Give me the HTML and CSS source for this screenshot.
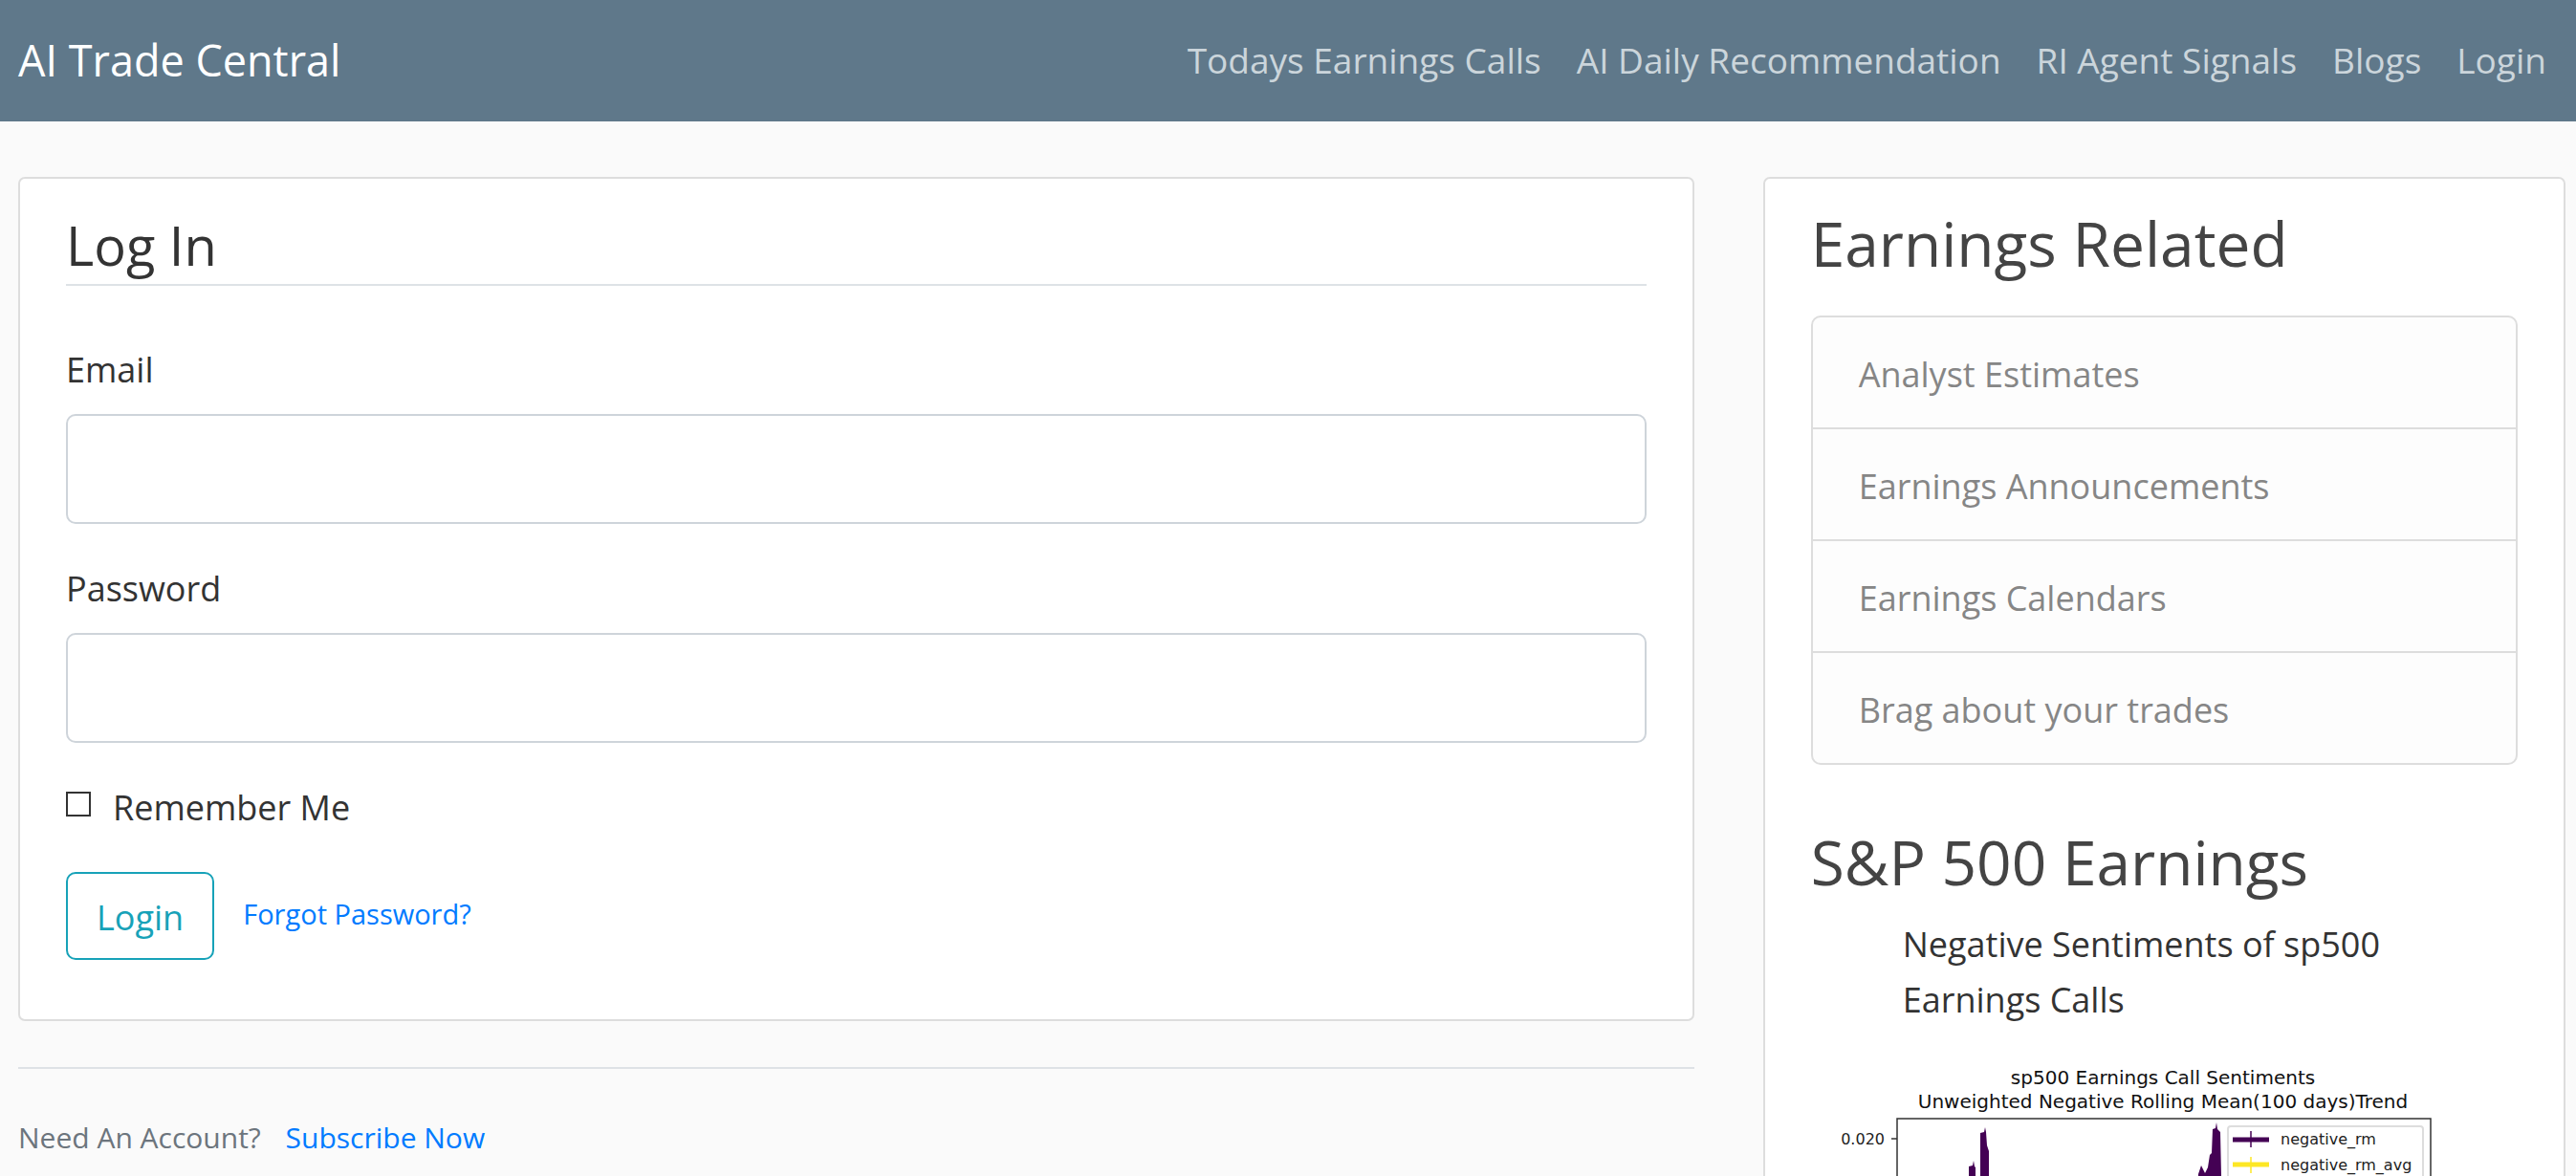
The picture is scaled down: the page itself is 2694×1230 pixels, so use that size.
FILE: index.html
```html
<!DOCTYPE html>
<html lang="en">
<head>
<meta charset="utf-8">
<meta name="viewport" content="width=device-width, initial-scale=1">
<title>AI Trade Central - Log In</title>
<link rel="stylesheet" href="styles.css">
</head>
<body>
<header class="navbar">
  <a class="brand" href="#">AI Trade Central</a>
  <nav class="nav">
    <a href="#">Todays Earnings Calls</a>
    <a href="#">AI Daily Recommendation</a>
    <a href="#">RI Agent Signals</a>
    <a href="#">Blogs</a>
    <a href="#">Login</a>
  </nav>
</header>
<main class="layout">
  <div class="primary">
    <section class="card login-card">
      <form>
        <h1 class="legend">Log In</h1>
        <div class="field">
          <label for="email">Email</label>
          <input class="control" id="email" type="email">
        </div>
        <div class="field">
          <label for="password">Password</label>
          <input class="control" id="password" type="password">
        </div>
        <div class="check">
          <input id="remember" type="checkbox">
          <label for="remember">Remember Me</label>
        </div>
        <div class="actions">
          <button class="button" type="submit">Login</button>
          <a class="small-link" href="#">Forgot Password?</a>
        </div>
      </form>
    </section>
    <p class="signup">Need An Account? <a href="#">Subscribe Now</a></p>
  </div>
  <aside class="card sidebar">
    <h2 class="heading">Earnings Related</h2>
    <ul class="list">
      <li><a href="#">Analyst Estimates</a></li>
      <li><a href="#">Earnings Announcements</a></li>
      <li><a href="#">Earnings Calendars</a></li>
      <li><a href="#">Brag about your trades</a></li>
    </ul>
    <h2 class="heading">S&amp;P 500 Earnings</h2>
    <figure class="figure">
      <figcaption>Negative Sentiments of sp500 Earnings Calls</figcaption>
      <svg class="chart" width="720" height="540" viewBox="0 0 720 540" role="img" aria-label="sp500 earnings call sentiments">
        <g fill="#440154">
          <path d="M165 540V115L169 114L170 109L171 115L172 116V540Z"/>
          <path d="M177 540V80L181 79L182 74L183 79L184 93L186 99V540Z"/>
          <path d="M405 540V123L408 114L412 122L415 116L417 103L419 101L420 76L423 75L424 69L425 76L428 79L429 125V540Z"/>
        </g>
        <rect class="frame" x="90" y="65" width="558" height="416"/>
        <path class="frame" d="M84 86H90"/>
        <rect class="key-box" x="436" y="73" width="204" height="66" rx="3"/>
        <path d="M441 87H479" stroke="#440154" stroke-width="5"/>
        <path d="M460 78V95" stroke="#440154" stroke-width="1.5"/>
        <path d="M441 113H479" stroke="#fde725" stroke-width="5"/>
        <path d="M460 105V122" stroke="#fde725" stroke-width="1.5"/>
        <g class="chart-title">
          <text x="368" y="29">sp500 Earnings Call Sentiments</text>
          <text x="368" y="54">Unweighted Negative Rolling Mean(100 days)Trend</text>
        </g>
        <g class="chart-label">
          <text x="77" y="92" text-anchor="end">0.020</text>
          <text x="491" y="92">negative_rm</text>
          <text x="491" y="119">negative_rm_avg</text>
        </g>
      </svg>
    </figure>
  </aside>
</main>
</body>
</html>
```
FILE: styles.css
```css
* { box-sizing: border-box; }

body {
  margin: 0;
  height: 100vh;
  overflow: hidden;
  background: #fafafa;
  color: #333;
  font: 36px/58px "Open Sans", "Noto Sans", sans-serif;
}

a { color: #007bff; text-decoration: none; }

.navbar {
  display: flex;
  align-items: center;
  justify-content: space-between;
  padding: 34px 31px 35px 19px;
  background: #5f788a;
}
.brand { color: #fff; font-size: 45px; }
.nav { display: flex; gap: 37px; font-size: 37px; }
.nav a { color: #cbd5db; }

.layout {
  display: grid;
  grid-template-columns: 1752fr 839fr;
  gap: 72px;
  align-items: start;
  margin: 58px 11px 0 19px;
}

.card {
  background: #fff;
  border: 2px solid #ddd;
  border-radius: 7px;
  padding: 28px 48px;
}
.login-card { padding-bottom: 62px; }

.legend {
  margin: 0 0 59px;
  padding: 6px 0;
  border-bottom: 2px solid #dee2e6;
  font-size: 56px;
  font-weight: 400;
  line-height: 70px;
}
.field { margin-bottom: 39px; }
.field label { display: block; margin-bottom: 17px; }
.control {
  display: block;
  width: 100%;
  height: 115px;
  padding: 0 28px;
  background: #fff;
  border: 2px solid #ced4da;
  border-radius: 10px;
  font: inherit;
}
.check { display: flex; gap: 23px; }
.check input {
  appearance: none;
  width: 26px;
  height: 26px;
  margin: 12px 0 0;
  background: #fff;
  border: 2px solid #333;
}
.actions { display: flex; align-items: center; gap: 30px; margin-top: 38px; }
.button {
  height: 92px;
  padding: 4px 30px 0;
  background: transparent;
  border: 2px solid #17a2b8;
  border-radius: 10px;
  color: #17a2b8;
  font: inherit;
}
.small-link { padding-bottom: 4px; font-size: 29px; }
.signup {
  margin: 48px 0 0;
  padding-top: 43px;
  border-top: 2px solid #dee2e6;
  color: #6c757d;
  font-size: 30px;
}
.signup a { margin-left: 18px; }

.heading {
  margin: 0;
  color: #444;
  font-size: 64px;
  font-weight: 400;
  line-height: 80px;
}
.list {
  margin: 35px 0 62px;
  padding: 0;
  list-style: none;
  background: #fdfdfd;
  border: 2px solid #ddd;
  border-radius: 10px;
}
.list li + li { border-top: 2px solid #ddd; }
.list a {
  display: block;
  padding: 31px 48px 26px;
  color: #868686;
}

.figure { margin: 17px 0 0; }
.figure figcaption { margin: 0 96px 30px; }
.chart { display: block; font-family: "DejaVu Sans", sans-serif; }
.frame { fill: none; stroke: #333; stroke-width: 1.5; }
.key-box { fill: #fff; fill-opacity: .8; stroke: #ddd; stroke-width: 2; }
.chart-title { fill: #111; font-size: 20px; text-anchor: middle; }
.chart-label { fill: #222; font-size: 16px; }
```
